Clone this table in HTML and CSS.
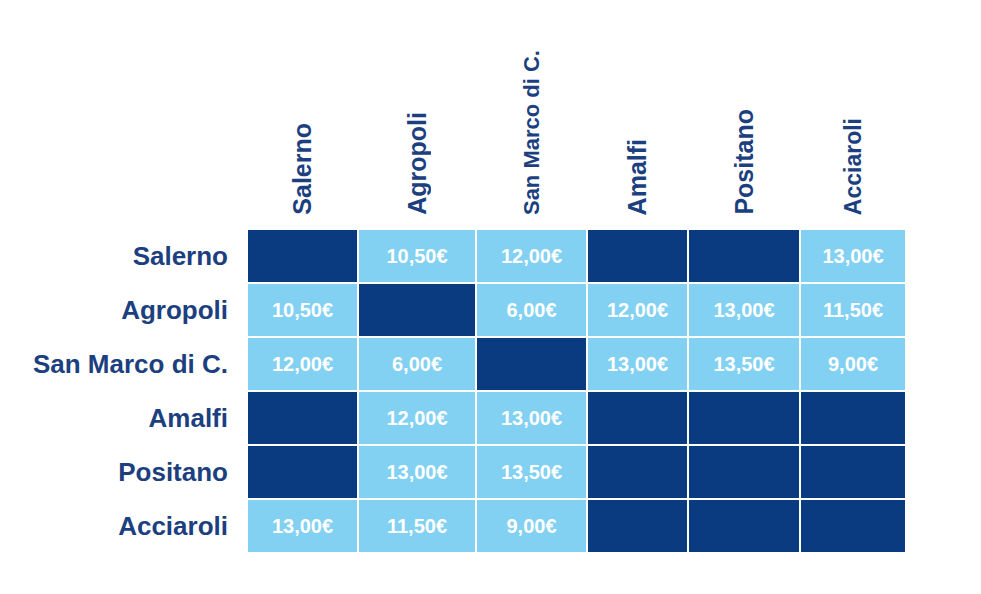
FILE: index.html
```html
<!DOCTYPE html>
<html lang="it">
<head>
<meta charset="utf-8">
<title>Tariffe</title>
<link rel="stylesheet" href="styles.css">
</head>
<body>
<main class="matrix">
  <div class="corner"></div>
  <div class="colhead"><span class="vtext">Salerno</span></div>
  <div class="colhead"><span class="vtext">Agropoli</span></div>
  <div class="colhead"><span class="vtext vtext-sm">San Marco di C.</span></div>
  <div class="colhead"><span class="vtext">Amalfi</span></div>
  <div class="colhead"><span class="vtext">Positano</span></div>
  <div class="colhead"><span class="vtext vtext-md">Acciaroli</span></div>

  <div class="rowhead">Salerno</div>
  <div class="cell dark"></div>
  <div class="cell light">10,50€</div>
  <div class="cell light">12,00€</div>
  <div class="cell dark"></div>
  <div class="cell dark"></div>
  <div class="cell light">13,00€</div>

  <div class="rowhead">Agropoli</div>
  <div class="cell light">10,50€</div>
  <div class="cell dark"></div>
  <div class="cell light">6,00€</div>
  <div class="cell light">12,00€</div>
  <div class="cell light">13,00€</div>
  <div class="cell light">11,50€</div>

  <div class="rowhead">San Marco di C.</div>
  <div class="cell light">12,00€</div>
  <div class="cell light">6,00€</div>
  <div class="cell dark"></div>
  <div class="cell light">13,00€</div>
  <div class="cell light">13,50€</div>
  <div class="cell light">9,00€</div>

  <div class="rowhead">Amalfi</div>
  <div class="cell dark"></div>
  <div class="cell light">12,00€</div>
  <div class="cell light">13,00€</div>
  <div class="cell dark"></div>
  <div class="cell dark"></div>
  <div class="cell dark"></div>

  <div class="rowhead">Positano</div>
  <div class="cell dark"></div>
  <div class="cell light">13,00€</div>
  <div class="cell light">13,50€</div>
  <div class="cell dark"></div>
  <div class="cell dark"></div>
  <div class="cell dark"></div>

  <div class="rowhead">Acciaroli</div>
  <div class="cell light">13,00€</div>
  <div class="cell light">11,50€</div>
  <div class="cell light">9,00€</div>
  <div class="cell dark"></div>
  <div class="cell dark"></div>
  <div class="cell dark"></div>
</main>
</body>
</html>
```

FILE: styles.css
```css
html, body {
  margin: 0;
  padding: 0;
  background: #ffffff;
}

body {
  width: 981px;
  height: 594px;
  overflow: hidden;
  font-family: "Liberation Sans", Arial, sans-serif;
  font-weight: 700;
}

.matrix {
  display: grid;
  grid-template-columns: 246px 109px 116px 109px 99px 110px 104px;
  grid-template-rows: 228px repeat(6, 52px);
  gap: 2px;
}

.colhead {
  display: flex;
  align-items: flex-end;
  justify-content: center;
  padding-bottom: 13px;
}

.vtext {
  writing-mode: vertical-rl;
  transform: rotate(180deg);
  font-size: 25px;
  line-height: 1;
  color: #1c3f80;
  white-space: nowrap;
}

.vtext-sm {
  font-size: 22px;
}

.vtext-md {
  font-size: 23px;
}

.rowhead {
  display: flex;
  align-items: center;
  justify-content: flex-end;
  padding-right: 18px;
  font-size: 26px;
  color: #1c3f80;
  white-space: nowrap;
}

.cell {
  display: flex;
  align-items: center;
  justify-content: center;
  font-size: 20px;
  color: #ffffff;
}

.dark {
  background: #0a3b80;
}

.light {
  background: #82d1f2;
}
```
